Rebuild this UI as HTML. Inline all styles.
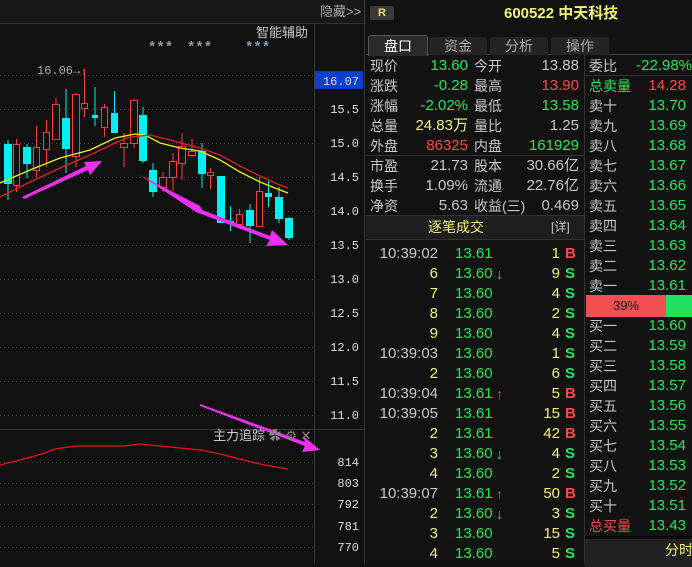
<!DOCTYPE html><html><head><meta charset="utf-8"><style>
body{margin:0;width:692px;height:564px;background:#111;overflow:hidden;position:relative;font-family:"Liberation Sans","Noto Sans CJK SC",sans-serif;}
.a{position:absolute;white-space:nowrap;font-size:14px;line-height:20px}
.n{font-size:15px}
.g{color:#22e65a}.r{color:#ff4848}.y{color:#f2f27a}.w{color:#c8c8c8}
.rt{text-align:right}
</style></head><body>
<svg width="366" height="564" style="position:absolute;left:0;top:0">
<rect x="0" y="0" width="366" height="23" fill="#181818"/>
<line x1="0" y1="23.5" x2="366" y2="23.5" stroke="#333"/>
<line x1="314.5" y1="23" x2="314.5" y2="564" stroke="#3a3a3a"/>
<line x1="364.5" y1="0" x2="364.5" y2="564" stroke="#3a3a3a"/>
<line x1="0" y1="429.5" x2="364" y2="429.5" stroke="#3a3a3a"/>
<g stroke="#444" stroke-dasharray="1,3">
<line x1="0" y1="75.5" x2="314" y2="75.5"/><line x1="0" y1="109.5" x2="314" y2="109.5"/><line x1="0" y1="143.5" x2="314" y2="143.5"/><line x1="0" y1="177.5" x2="314" y2="177.5"/><line x1="0" y1="211.5" x2="314" y2="211.5"/><line x1="0" y1="245.5" x2="314" y2="245.5"/><line x1="0" y1="279.5" x2="314" y2="279.5"/><line x1="0" y1="313.5" x2="314" y2="313.5"/><line x1="0" y1="347.5" x2="314" y2="347.5"/><line x1="0" y1="381.5" x2="314" y2="381.5"/><line x1="0" y1="415.5" x2="314" y2="415.5"/>
<line x1="0" y1="462.5" x2="314" y2="462.5"/><line x1="0" y1="483.5" x2="314" y2="483.5"/><line x1="0" y1="504.5" x2="314" y2="504.5"/><line x1="0" y1="526.5" x2="314" y2="526.5"/><line x1="0" y1="547.5" x2="314" y2="547.5"/>
</g>
<g id="c"></g>
<polyline fill="none" stroke="#f0f000" stroke-width="1.3" points="0,183 30,170 60,158 90,150 115,138 135,134 145,135 160,143 180,148 200,151 220,160 240,172 260,182 280,190 288,193"/>
<polyline fill="none" stroke="#e02020" stroke-width="1.3" points="0,197 30,182 60,168 90,155 115,143 130,137 150,135 170,140 200,148 220,155 240,166 260,176 275,183 288,188"/>
<g fill="#ee2ef0">
<polygon points="22,197 86,166 84,162 102,161 90,175 88,170 24,199"/>
<polygon points="140,175 200,206 202,210 270,236 272,230 288,245 266,246 270,240 196,212 190,208"/>
<polygon points="200,404 305,442 303,436 320,450 302,452 305,446 200,406"/>
</g>
<polyline fill="none" stroke="#f01010" stroke-width="1.2" points="0,465 20,460 45,453 55,449 75,446 125,446 140,444 160,446 180,448 200,450 220,454 240,459 255,463 270,466 288,469"/>
<text x="37" y="74" fill="#aaa" font-size="12" font-family="Liberation Mono,monospace">16.06→</text>
<line x1="84" y1="69" x2="84" y2="75" stroke="#ff4040"/>
<g fill="#8aa0b0" font-size="14" font-family="Liberation Mono,monospace" font-weight="bold">
<text x="148" y="51">***</text><text x="187" y="51">***</text><text x="245" y="51">***</text></g>
<rect x="315" y="71" width="48" height="18" fill="#0a3fd0"/>
<g fill="#ddd" font-size="12" font-family="Liberation Mono,monospace" text-anchor="end">
<text x="359" y="85">16.07</text><text x="359" y="113">15.5</text><text x="359" y="147">15.0</text><text x="359" y="181">14.5</text><text x="359" y="215">14.0</text><text x="359" y="249">13.5</text><text x="359" y="283">13.0</text><text x="359" y="317">12.5</text><text x="359" y="351">12.0</text><text x="359" y="385">11.5</text><text x="359" y="419">11.0</text>
<text x="359" y="466">814</text><text x="359" y="487">803</text><text x="359" y="508">792</text><text x="359" y="530">781</text><text x="359" y="551">770</text>
</g>
</svg>
<div class="a w" style="left:320px;top:2px;font-size:13px;color:#aaa">隐藏&gt;&gt;</div>
<div class="a w" style="left:256px;top:23px;font-size:13px">智能辅助</div>
<div class="a w" style="left:213px;top:426px;font-size:13px">主力追踪 <span style="color:#888">✿ ⚙ ✕</span></div>

<div style="position:absolute;left:366px;top:0;width:326px;height:564px;background:#121212">
<div style="position:absolute;left:4px;top:6px;width:24px;height:14px;background:#3a3a3a;border-radius:2px;color:#f0e060;font-size:11px;text-align:center;line-height:14px;font-weight:bold">R</div>
<div class="a y" style="left:138px;top:4px;font-size:15px;font-weight:bold">600522 中天科技</div>
<div style="position:absolute;left:0;top:54px;width:326px;border-top:1px solid #444"></div>
<div style="position:absolute;left:2px;top:35px;width:58px;height:20px;background:#2a2a2a;border:1px solid #555;border-bottom:none;border-radius:3px 3px 0 0;color:#fff;font-size:14px;text-align:center;line-height:20px">盘口</div>
<div style="position:absolute;left:63px;top:37px;width:58px;height:18px;background:#242424;border-radius:3px 3px 0 0;color:#aaa;font-size:14px;text-align:center;line-height:18px">资金</div>
<div style="position:absolute;left:124px;top:37px;width:58px;height:18px;background:#242424;border-radius:3px 3px 0 0;color:#aaa;font-size:14px;text-align:center;line-height:18px">分析</div>
<div style="position:absolute;left:185px;top:37px;width:58px;height:18px;background:#242424;border-radius:3px 3px 0 0;color:#aaa;font-size:14px;text-align:center;line-height:18px">操作</div>
<div style="position:absolute;left:218px;top:55px;height:509px;border-left:1px solid #333"></div>
<div style="position:absolute;left:0;top:155px;width:218px;border-top:1px solid #333"></div>
<div style="position:absolute;left:0;top:215px;width:218px;height:23px;background:#1e1e1e;border-top:1px solid #333;border-bottom:1px solid #333"></div>
<div class="a y" style="left:62px;top:217px">逐笔成交</div>
<div class="a w" style="left:185px;top:217px;font-size:12px">[详]</div>
</div>
<div id="R"></div>
<div style="position:absolute;left:585px;top:75px;width:107px;border-top:1px solid #333"></div>
<div style="position:absolute;left:586px;top:295px;width:80px;height:22px;background:#f05050"></div>
<div style="position:absolute;left:666px;top:295px;width:26px;height:22px;background:#22e060"></div>
<div class="a" style="left:613px;top:296px;color:#111;font-size:13px">39%</div>
<div style="position:absolute;left:585px;top:536px;width:107px;height:28px;background:#222;border-top:3px solid #0a0a0a"></div>
<div class="a y" style="left:665px;top:540px">分时</div>
<script>
var cs=[[4,11,144,184,140,200,'c'],[13,19,144,185,139,192,'r'],[23,30,147,164,144,178,'c'],[33,39,147,170,126,177,'r'],[43,49,132,149,120,167,'r'],[52,59,104,139,98,139,'r'],[62,69,118,149,89,173,'c'],[72,79,94,156,93,167,'r'],[81,87,103,108,69,117,'r'],[92,97,115,118,87,126,'c'],[101,107,107,127,104,137,'r'],[111,117,113,133,91,133,'c'],[120,127,143,147,133,167,'r'],[130,137,100,143,99,148,'r'],[139,146,115,161,107,163,'c'],[149,156,170,192,163,197,'c'],[159,166,177,187,172,192,'r'],[169,176,161,177,153,191,'r'],[178,185,146,163,133,180,'r'],[188,195,151,155,139,157,'r'],[198,205,151,174,143,188,'c'],[207,213,172,175,168,189,'r'],[217,224,176,223,176,223,'c'],[227,233,221,223,206,231,'c'],[236,242,214,224,209,226,'r'],[246,253,210,226,204,243,'c'],[256,262,191,226,177,226,'r'],[265,271,193,197,181,207,'c'],[275,282,197,219,187,223,'c'],[285,292,218,238,217,240,'c']];
var s='';cs.forEach(function(c){var col=c[6]=='r'?'#ff3c3c':'#00f0f0';var m=(c[0]+c[1])/2+0.5;
s+='<line x1="'+m+'" x2="'+m+'" y1="'+c[4]+'" y2="'+c[5]+'" stroke="'+col+'"/>';
if(c[6]=='r')s+='<rect x="'+(c[0]+0.5)+'" y="'+(c[2]+0.5)+'" width="'+(c[1]-c[0])+'" height="'+Math.max(c[3]-c[2],1)+'" fill="#111" stroke="'+col+'"/>';
else s+='<rect x="'+c[0]+'" y="'+c[2]+'" width="'+(c[1]-c[0]+1)+'" height="'+Math.max(c[3]-c[2],2)+'" fill="'+col+'"/>';});
document.getElementById('c').innerHTML=s;
var h='';function t(x,y,txt,cls,st){h+='<div class="a '+cls+'" style="left:'+x+'px;top:'+(y-10)+'px;'+(st||'')+'">'+txt+'</div>';}
function tr(r,y,txt,cls){h+='<div class="a rt '+cls+'" style="right:'+(692-r)+'px;top:'+(y-10)+'px">'+txt+'</div>';}
var q=[['现价','13.60','g','今开','13.88','w'],['涨跌','-0.28','g','最高','13.90','r'],['涨幅','-2.02%','g','最低','13.58','g'],['总量','24.83万','y','量比','1.25','w'],['外盘','86325','r','内盘','161929','g'],['市盈','21.73','w','股本','30.66亿','w'],['换手','1.09%','w','流通','22.76亿','w'],['净资','5.63','w','收益(三)','0.469','w']];
q.forEach(function(r,i){var y=66+i*20;t(370,y,r[0],'w');tr(468,y,r[1],r[2]+' n');t(474,y,r[3],'w');tr(579,y,r[4],r[5]+' n');});
var tds=[['10:39:02','13.61','','1','B'],['6','13.60','↓','9','S'],['7','13.60','','4','S'],['8','13.60','','2','S'],['9','13.60','','4','S'],['10:39:03','13.60','','1','S'],['2','13.60','','6','S'],['10:39:04','13.61','↑','5','B'],['10:39:05','13.61','','15','B'],['2','13.61','','42','B'],['3','13.60','↓','4','S'],['4','13.60','','2','S'],['10:39:07','13.61','↑','50','B'],['2','13.60','↓','3','S'],['3','13.60','','15','S'],['4','13.60','','5','S']];
tds.forEach(function(r,i){var y=254+i*20;tr(438,y,r[0],(r[0].length>2?'w':'y')+' n');t(455,y,r[1],'g n');if(r[2])t(496,y,r[2],r[2]=='↑'?'r':'g','font-weight:bold');tr(560,y,r[3],'y n');t(565,y,r[4],r[4]=='B'?'r':'g','font-weight:bold;font-size:15px');});
t(589,66,'委比','w');tr(692,66,'-22.98%','g n');
var sl=['十','九','八','七','六','五','四','三','二','一'];
t(589,86,'总卖量','g');tr(686,86,'14.28','r n');
sl.forEach(function(c,i){t(589,106+i*20,'卖'+c,'w');tr(686,106+i*20,(13.70-i*0.01).toFixed(2),'g n');});
sl.slice().reverse().forEach(function(c,i){t(589,326+i*20,'买'+c,'w');tr(686,326+i*20,(13.60-i*0.01).toFixed(2),'g n');});
t(589,526,'总买量','r');tr(686,526,'13.43','g n');
document.getElementById('R').innerHTML=h;
</script>
</body></html>
